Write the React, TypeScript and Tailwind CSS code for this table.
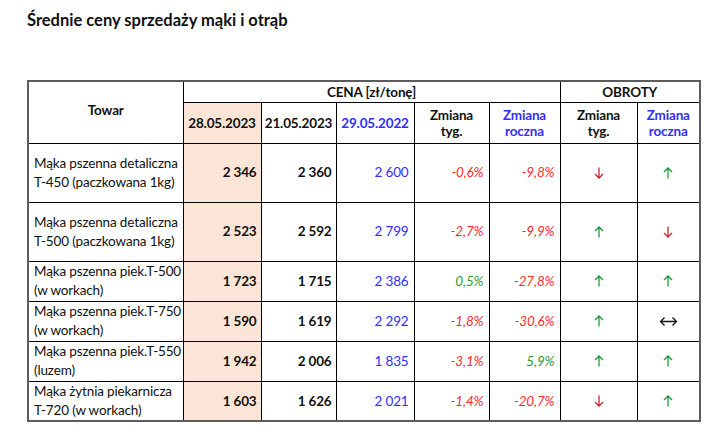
import type {ReactNode} from 'react';

type Dir = 'up' | 'down' | 'flat';

type Row = {
  name: [string, string];
  cur: string;
  prev: string;
  year: string;
  wk: string;
  yr: string;
  obWk: Dir;
  obYr: Dir;
  tall?: boolean;
};

const ROWS: Row[] = [
  {name: ['Mąka pszenna detaliczna', 'T-450 (paczkowana 1kg)'], cur: '2 346', prev: '2 360', year: '2 600', wk: '-0,6%', yr: '-9,8%', obWk: 'down', obYr: 'up', tall: true},
  {name: ['Mąka pszenna detaliczna', 'T-500 (paczkowana 1kg)'], cur: '2 523', prev: '2 592', year: '2 799', wk: '-2,7%', yr: '-9,9%', obWk: 'up', obYr: 'down', tall: true},
  {name: ['Mąka pszenna piek.T-500', '(w workach)'], cur: '1 723', prev: '1 715', year: '2 386', wk: '0,5%', yr: '-27,8%', obWk: 'up', obYr: 'up'},
  {name: ['Mąka pszenna piek.T-750', '(w workach)'], cur: '1 590', prev: '1 619', year: '2 292', wk: '-1,8%', yr: '-30,6%', obWk: 'up', obYr: 'flat'},
  {name: ['Mąka pszenna piek.T-550', '(luzem)'], cur: '1 942', prev: '2 006', year: '1 835', wk: '-3,1%', yr: '5,9%', obWk: 'up', obYr: 'up'},
  {name: ['Mąka żytnia piekarnicza', 'T-720 (w workach)'], cur: '1 603', prev: '1 626', year: '2 021', wk: '-1,4%', yr: '-20,7%', obWk: 'down', obYr: 'up'},
];

const Arrow = ({dir}: {dir: Dir}) => {
  if (dir === 'flat') {
    return (
      <svg className="mx-auto block" width="19" height="11" viewBox="0 0 19 11" fill="none" stroke="#111" strokeWidth="1.3">
        <path d="M1.5 5.5h16M5.5 1.5l-4 4 4 4M13.5 1.5l4 4-4 4" />
      </svg>
    );
  }
  const color = dir === 'up' ? '#1f9a3c' : '#c0282d';
  return (
    <svg className="mx-auto block" width="10" height="12" viewBox="0 0 10 12" fill="none" stroke={color} strokeWidth="1.3">
      {dir === 'up' ? <path d="M5 11.5V1M1 5l4-4 4 4" /> : <path d="M5 0.5V11M1 7l4 4 4-4" />}
    </svg>
  );
};

const Pct = ({v}: {v: string}) => (
  <span className={v.startsWith('-') ? 'text-[#ff2b2b]' : 'text-[#2e9a2e]'}>{v}</span>
);

const Th = ({
  children,
  className = '',
  colSpan,
  rowSpan,
}: {
  children: ReactNode;
  className?: string;
  colSpan?: number;
  rowSpan?: number;
}) => (
  <th
    className={`border border-black p-0 text-center align-middle font-bold leading-[16px] ${className}`}
    colSpan={colSpan}
    rowSpan={rowSpan}
  >
    {children}
  </th>
);

export default function App() {
  return (
    <div className="h-[448px] w-[720px] bg-white text-[#111] [font-family:Lato,'Noto_Sans',sans-serif]">
      <h1 className="pl-[27px] pt-[9px] text-[16.5px] font-bold leading-[22px]">
        Średnie ceny sprzedaży mąki i otrąb
      </h1>

      <table className="ml-[27px] mt-[49px] w-[672px] table-fixed border-collapse border-2 border-[#5c5c5c] text-[13.5px] tracking-[-0.15px]">
        <colgroup>
          <col className="w-[155px]" />
          <col className="w-[78px]" />
          <col className="w-[75px]" />
          <col className="w-[78px]" />
          <col className="w-[75px]" />
          <col className="w-[71px]" />
          <col className="w-[77px]" />
          <col className="w-[63px]" />
        </colgroup>
        <thead>
          <tr className="h-[21px]">
            <Th className="pb-1" rowSpan={2}>
              Towar
            </Th>
            <Th colSpan={5}>CENA [zł/tonę]</Th>
            <Th colSpan={2}>OBROTY</Th>
          </tr>
          <tr className="h-[41px]">
            <Th className="bg-[#fce4d6]">28.05.2023</Th>
            <Th>21.05.2023</Th>
            <Th className="text-[#2f2fff]">29.05.2022</Th>
            <Th>
              Zmiana
              <br />
              tyg.
            </Th>
            <Th className="text-[#2f2fff]">
              Zmiana
              <br />
              roczna
            </Th>
            <Th>
              Zmiana
              <br />
              tyg.
            </Th>
            <Th className="text-[#2f2fff]">
              Zmiana
              <br />
              roczna
            </Th>
          </tr>
        </thead>
        <tbody>
          {ROWS.map((r) => (
            <tr className={r.tall ? 'h-[59px]' : 'h-[40px]'} key={r.name.join()}>
              <td className="whitespace-nowrap border border-black px-[5px] align-middle leading-[19px]">
                {r.name[0]}
                <br />
                {r.name[1]}
              </td>
              <td className="border border-black bg-[#fce4d6] px-[4px] text-right font-bold">{r.cur}</td>
              <td className="border border-black px-[4px] text-right font-bold">{r.prev}</td>
              <td className="border border-black px-[5px] text-right text-[#2f2fff]">{r.year}</td>
              <td className="border border-black px-[5px] text-right italic">
                <Pct v={r.wk} />
              </td>
              <td className="border border-black px-[5px] text-right italic">
                <Pct v={r.yr} />
              </td>
              <td className="border border-black">
                <Arrow dir={r.obWk} />
              </td>
              <td className="border border-black">
                <Arrow dir={r.obYr} />
              </td>
            </tr>
          ))}
        </tbody>
      </table>
    </div>
  );
}
